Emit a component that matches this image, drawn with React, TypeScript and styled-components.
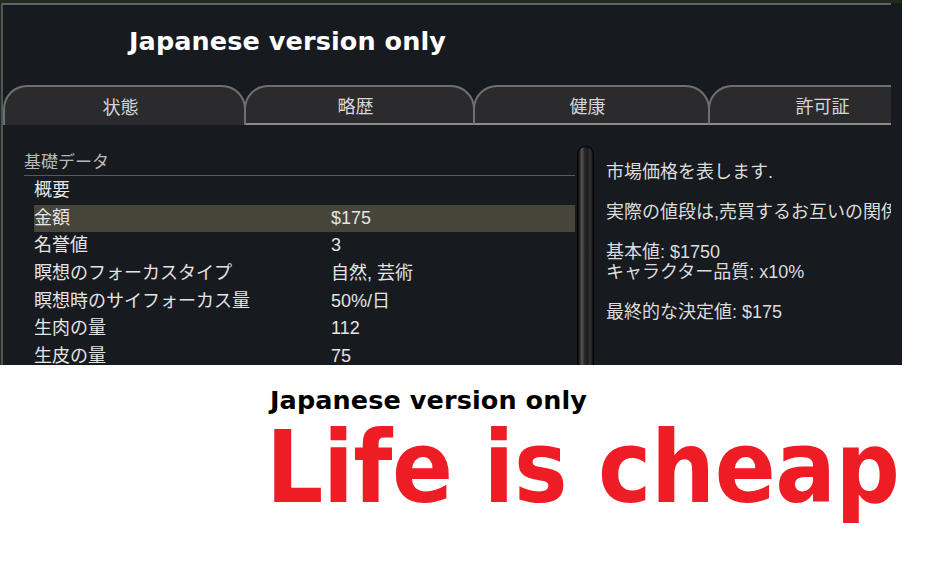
import React from "react";
import styled, { createGlobalStyle } from "styled-components";

const Global = createGlobalStyle`
  html, body {
    margin: 0;
    padding: 0;
    background: #ffffff;
  }
  body {
    font-family: "Liberation Sans", "Noto Sans CJK JP", sans-serif;
  }
`;

const Page = styled.div`
  width: 944px;
  height: 576px;
  overflow: hidden;
  background: #ffffff;
`;

/* Dark game window at the top of the page */
const Frame = styled.div`
  width: 902px;
  height: 365px;
  box-sizing: border-box;
  display: flex;
  background: #171a1f;
  border-top: 3px solid #222a1e;
  border-left: 1px solid #222a1e;
  overflow: hidden;
`;

const Window = styled.div`
  width: 890px;
  flex: none;
  display: flex;
  flex-direction: column;
  box-sizing: border-box;
  border-top: 2px solid #5b646e;
  border-left: 2px solid #4d545c;
  overflow: hidden;
`;

const TitleBar = styled.div`
  height: 80px;
  flex: none;
  display: flex;
  align-items: center;
  box-sizing: border-box;
  padding: 0 0 8px 126px;
`;

const Title = styled.h1`
  margin: 0;
  font-family: "DejaVu Sans", sans-serif;
  font-weight: bold;
  font-size: 25.5px;
  color: #ffffff;
  letter-spacing: 0.1px;
`;

const TabStrip = styled.div`
  display: flex;
  height: 40px;
  flex: none;
  overflow: hidden;
`;

const Tab = styled.div<{ $active?: boolean; $width: number }>`
  flex: none;
  width: ${(p) => p.$width}px;
  height: 40px;
  box-sizing: border-box;
  margin-left: -2px;
  &:first-child {
    margin-left: 0;
  }
  position: relative;
  z-index: ${(p) => (p.$active ? 1 : 0)};
  display: flex;
  align-items: center;
  justify-content: center;
  padding-right: 8px;
  background: #2b2b2d;
  border: 2px solid #6f6f70;
  border-bottom: ${(p) => (p.$active ? "none" : "2px solid #8a8a8a")};
  border-radius: 24px 24px 0 0;
  color: #d6d6d6;
  font-size: 18px;
`;

const Body = styled.div`
  flex: 1;
  min-height: 0;
  display: flex;
  padding-left: 21px;
  overflow: hidden;
`;

const ListPane = styled.div`
  width: 551px;
  flex: none;
  padding-top: 22px;
`;

const SectionHeader = styled.div`
  height: 28px;
  line-height: 31px;
  font-size: 17px;
  color: #b9b9b9;
  border-bottom: 1px solid #56595e;
  overflow: hidden;
`;

const Rows = styled.div`
  margin-top: 1px;
  padding-left: 10px;
`;

const Row = styled.div<{ $selected?: boolean }>`
  display: grid;
  grid-template-columns: 297px 1fr;
  height: 27.7px;
  line-height: 27.7px;
  font-size: 18px;
  white-space: nowrap;
  color: #e4e4e4;
  background: ${(p) => (p.$selected ? "#46453a" : "transparent")};
`;

const Scrollbar = styled.div`
  width: 17px;
  flex: none;
  margin: 21px 0 0 2px;
  box-sizing: border-box;
  border-radius: 9px 9px 0 0;
  border: 1px solid #050505;
  border-bottom: none;
  background: linear-gradient(
    90deg,
    #0b0b0b 0%,
    #2e2e2e 14%,
    #575757 26%,
    #2a2a2a 42%,
    #1c1c1c 62%,
    #343434 82%,
    #0b0b0b 100%
  );
`;

const Description = styled.div`
  flex: 1;
  min-width: 0;
  margin-left: 12px;
  padding-top: 37px;
  font-size: 18px;
  line-height: 20px;
  color: #dcdcdc;
  white-space: pre;
  overflow: hidden;
`;

const Edge = styled.div`
  flex: 1;
  background: #171a1f;
`;

/* Caption set on the white part of the page */
const Caption = styled.div`
  padding: 22px 0 0 270px;
`;

const Note = styled.div`
  font-family: "DejaVu Sans", sans-serif;
  font-weight: bold;
  font-size: 25.5px;
  line-height: 26px;
  color: #000000;
  letter-spacing: 0.1px;
`;

const Headline = styled.div`
  margin: 5px 0 0 -4px;
  font-family: "DejaVu Sans Condensed", "DejaVu Sans", sans-serif;
  font-stretch: condensed;
  font-weight: bold;
  font-size: 100px;
  line-height: 100px;
  letter-spacing: -0.4px;
  color: #ee1c25;
  white-space: nowrap;
`;

const tabs = [
  { label: "状態", width: 243 },
  { label: "略歴", width: 231 },
  { label: "健康", width: 237 },
  { label: "許可証", width: 237 },
];

const rows: { label: string; value: string; selected?: boolean }[] = [
  { label: "概要", value: "" },
  { label: "金額", value: "$175", selected: true },
  { label: "名誉値", value: "3" },
  { label: "瞑想のフォーカスタイプ", value: "自然, 芸術" },
  { label: "瞑想時のサイフォーカス量", value: "50%/日" },
  { label: "生肉の量", value: "112" },
  { label: "生皮の量", value: "75" },
];

const description = [
  "市場価格を表します.",
  "",
  "実際の値段は,売買するお互いの関係によって変わります.",
  "",
  "基本値: $1750",
  "キャラクター品質: x10%",
  "",
  "最終的な決定値: $175",
].join("\n");

export default function App() {
  return (
    <Page>
      <Global />
      <Frame>
        <Window>
          <TitleBar>
            <Title>Japanese version only</Title>
          </TitleBar>
          <TabStrip>
            {tabs.map((t, i) => (
              <Tab key={t.label} $active={i === 0} $width={t.width}>
                {t.label}
              </Tab>
            ))}
          </TabStrip>
          <Body>
            <ListPane>
              <SectionHeader>基礎データ</SectionHeader>
              <Rows>
                {rows.map((r) => (
                  <Row key={r.label} $selected={r.selected}>
                    <span>{r.label}</span>
                    <span>{r.value}</span>
                  </Row>
                ))}
              </Rows>
            </ListPane>
            <Scrollbar />
            <Description>{description}</Description>
          </Body>
        </Window>
        <Edge />
      </Frame>
      <Caption>
        <Note>Japanese version only</Note>
        <Headline>Life is cheap</Headline>
      </Caption>
    </Page>
  );
}
